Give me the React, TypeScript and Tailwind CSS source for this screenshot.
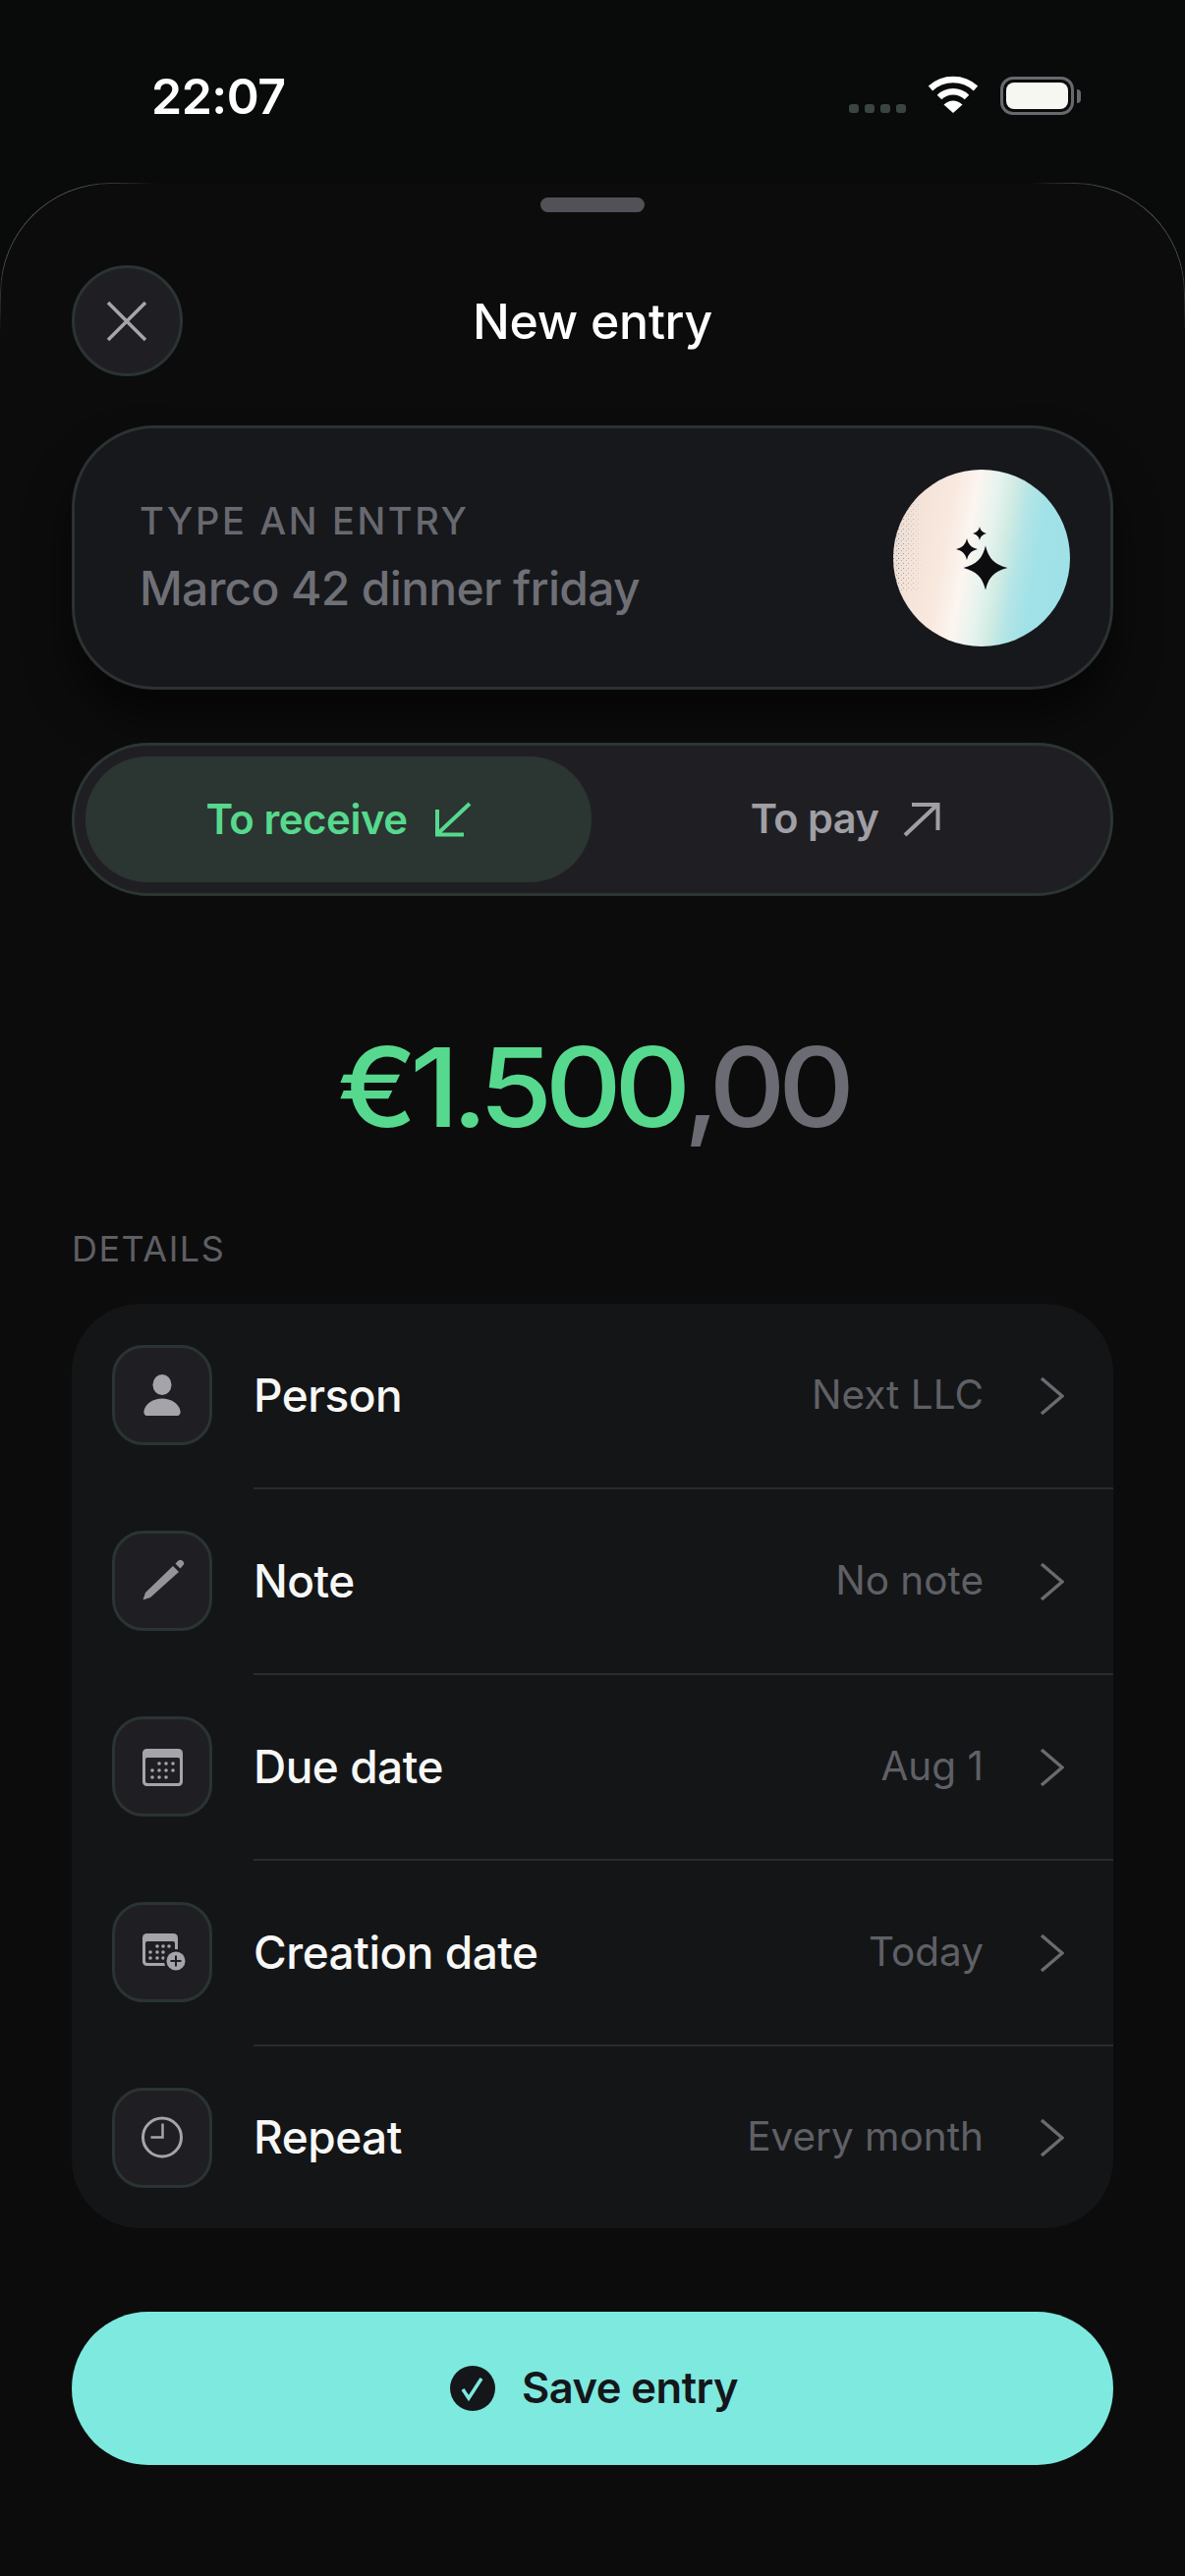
import { FC, ReactNode } from "react";

const Star: FC<{ x: number; y: number; r: number }> = ({ x, y, r }) => (
  <path
    transform={`translate(${x} ${y}) scale(${r})`}
    d="M0 -1C.14 -.42 .4 -.16 1 0C.4 .16 .14 .42 0 1C-.14 .42 -.4 .16 -1 0C-.4 -.16 -.14 -.42 0 -1Z"
  />
);

const Box: FC<{ children: ReactNode }> = ({ children }) => (
  <div className="flex h-[102px] w-[102px] shrink-0 items-center justify-center rounded-[32px] border-[3px] border-[#2a3432] bg-[#1f1f23]">
    <svg width="60" height="60" viewBox="0 0 60 60" fill="#a5a4aa">
      {children}
    </svg>
  </div>
);

const PersonIcon = () => (
  <Box>
    <ellipse cx="30" cy="19.5" rx="9.5" ry="10.5" />
    <path d="M11.5 46C13 38.5 21 33.5 30 33.5C39 33.5 47 38.5 48.5 46C49 49 47.5 51 45 51H15C12.5 51 11 49 11.5 46Z" />
  </Box>
);

const PencilIcon = () => (
  <Box>
    <path fill="#949499" d="M10.5 49.5L13 42L41 15L47 21L18 47Z" />
    <path fill="#949499" d="M43.5 12.5L46.5 9.5C48 8.500 49.500 8.500 50.500 9.500L51.500 10.500C52.500 11.500 52.500 13 51.500 14L48.500 17.500Z" />
  </Box>
);

const Dots: FC<{ dots: number[][] }> = ({ dots }) => (
  <>
    {dots.map(([x, y]) => (
      <circle key={`${x}-${y}`} cx={x} cy={y} r="1.8" />
    ))}
  </>
);

const CalendarIcon = () => (
  <Box>
    <rect x="10" y="12" width="41" height="38" rx="4.500" />
    <rect x="13" y="21" width="35" height="26" rx="2" fill="#1f1f23" />
    <Dots
      dots={[
        [27, 27], [34, 27], [41, 27],
        [20, 34], [27, 34], [34, 34], [41, 34],
        [20, 41], [27, 41], [34, 41],
      ]}
    />
  </Box>
);

const CalendarPlusIcon = () => (
  <Box>
    <rect x="10" y="11" width="36" height="33" rx="4.500" />
    <rect x="13" y="19" width="30" height="22" rx="2" fill="#1f1f23" />
    <Dots
      dots={[
        [25, 24], [31, 24], [37, 24],
        [18, 30], [25, 30], [31, 30],
        [18, 36], [25, 36], [31, 36],
      ]}
    />
    <circle cx="44" cy="39" r="12" fill="#1f1f23" />
    <circle cx="44" cy="39" r="9.500" />
    <path d="M38.500 39H49.500M44 33.500V44.500" stroke="#1f1f23" strokeWidth="2" />
  </Box>
);

const ClockIcon = () => (
  <Box>
    <circle cx="30" cy="29.500" r="19.500" fill="none" stroke="#a5a4aa" strokeWidth="3" />
    <path d="M30.500 15.500V29.500H18.500" fill="none" stroke="#a5a4aa" strokeWidth="2.500" />
  </Box>
);

const rows = [
  { icon: <PersonIcon />, label: "Person", value: "Next LLC" },
  { icon: <PencilIcon />, label: "Note", value: "No note" },
  { icon: <CalendarIcon />, label: "Due date", value: "Aug 1" },
  { icon: <CalendarPlusIcon />, label: "Creation date", value: "Today" },
  { icon: <ClockIcon />, label: "Repeat", value: "Every month" },
];

const Row: FC<{ icon: ReactNode; label: string; value: string; last: boolean }> = ({ icon, label, value, last }) => (
  <div className={last ? "flex h-[185px] items-center pl-[41px]" : "flex h-[189px] items-center pl-[41px]"}>
    <div className={last ? "" : "mb-[3px]"}>{icon}</div>
    <div
      className={
        last
          ? "ml-[42px] flex h-full flex-1 items-center pr-[50px]"
          : "ml-[42px] flex h-full flex-1 items-center border-b-2 border-[#2a2b2d] pr-[50px]"
      }
    >
      <span className="mb-[1px] text-[46px] leading-none font-medium tracking-[-0.5px] text-[#f7f8f6]">{label}</span>
      <span className="mb-[1px] ml-auto text-[40.5px] leading-none text-[#5f6066]">{value}</span>
      <svg className="ml-[57px]" width="25" height="40" viewBox="0 0 25 40" fill="none" stroke="#6a6a70" strokeWidth="3.500">
        <path d="M2 2L23 20L2 38" />
      </svg>
    </div>
  </div>
);

const App: FC = () => {
  return (
    <div className="flex h-[2622px] w-[1206px] flex-col overflow-hidden bg-[#090a0a] font-['Inter',sans-serif]">
      {/* status bar */}
      <div className="relative flex h-[186px] shrink-0 items-start pt-[68px] pr-[106px] pl-[154px]">
        <span className="text-[50px] leading-[60px] font-semibold tracking-[-0.5px] text-white">22:07</span>
        <div className="mt-[9px] ml-auto flex items-end">
          <div className="mb-[8px] flex gap-[6px]">
            <div className="h-[9px] w-[10px] rounded-[3px] bg-[#3b4540]" />
            <div className="h-[9px] w-[10px] rounded-[3px] bg-[#3b4540]" />
            <div className="h-[9px] w-[10px] rounded-[3px] bg-[#3b4540]" />
            <div className="h-[9px] w-[10px] rounded-[3px] bg-[#3b4540]" />
          </div>
          <svg className="mb-[8px] ml-[22px]" width="52" height="38" viewBox="0 0 52 38" fill="none" stroke="#fff" strokeWidth="6.500">
            <path d="M3 13A34 34 0 0 1 49 13" />
            <path d="M12 22A20 20 0 0 1 40 22" />
            <path fill="#fff" stroke="none" d="M26 38L16.500 29.500Q26 21.500 35.500 29.500Z" />
          </svg>
          <div className="mb-[6px] ml-[22px] flex items-center">
            <div className="flex h-[39px] w-[75px] rounded-[13px] border-[3px] border-[#68686e] p-[3px]">
              <div className="flex-1 rounded-[8px] bg-[#f6f6f3]" />
            </div>
            <div className="ml-[3px] h-[14px] w-[4px] rounded-r-full bg-[#68686e]" />
          </div>
        </div>
      </div>

      {/* sheet */}
      <div className="relative flex flex-1 flex-col rounded-t-[112px] bg-[#0c0c0c] px-[73px]">
        <div className="absolute top-0 left-0 h-[150px] w-[170px] rounded-tl-[112px] border-t border-l border-[#555555] [mask-image:radial-gradient(circle_at_20%_20%,#000_30%,transparent_70%)]" />
        <div className="absolute top-0 right-0 h-[150px] w-[170px] rounded-tr-[112px] border-t border-r border-[#555555] [mask-image:radial-gradient(circle_at_80%_20%,#000_30%,transparent_70%)]" />

        <div className="mt-[15px] h-[15px] w-[106px] self-center rounded-full bg-[#515157]" />

        <div className="mt-[54px] grid grid-cols-[113px_1fr_113px] items-center">
          <div className="flex h-[113px] w-[113px] items-center justify-center rounded-full border-[3px] border-[#2a3432] bg-[#1f1f23]">
            <svg className="mr-[2px]" width="42" height="42" viewBox="0 0 42 42" fill="none" stroke="#a5a5aa" strokeWidth="3.500">
              <path d="M2 2L40 40M40 2L2 40" />
            </svg>
          </div>
          <h1 className="text-center text-[50px] leading-none font-medium tracking-[-0.3px] text-white">New entry</h1>
        </div>

        <div className="mt-[50px] flex h-[269px] items-center rounded-[84px] border-[3px] border-[#2b3231] bg-[#16181c] pr-[41px] pl-[66px] shadow-[0_30px_45px_rgba(0,0,0,0.55)]">
          <div className="flex flex-col">
            <span className="text-[38px] leading-[46px] font-[450] tracking-[2.6px] text-[#68686f]">TYPE AN ENTRY</span>
            <span className="mt-[17px] text-[48px] leading-[58px] font-[450] tracking-[-0.7px] text-[#6f6f76]">Marco 42 dinner friday</span>
          </div>
          <div className="ml-auto h-[180px] w-[180px] rounded-full bg-[linear-gradient(100deg,#e6dcd5_0%,#f6e4d9_18%,#f8e8de_30%,#fcf5f0_42%,#e6f3ee_52%,#d0ebe3_60%,#b5e5e6_67%,#a1e2e8_76%,#9fe0e8_100%)]">
            <svg width="180" height="180" viewBox="0 0 180 180" fill="#0d0d0f">
              <defs>
                <pattern id="grain" width="5" height="5" patternUnits="userSpaceOnUse">
                  <rect width="1" height="1" fill="#77777f" />
                  <rect x="3" y="2" width="1" height="1" fill="#9a9aa0" />
                </pattern>
                <linearGradient id="fade" x1="0" x2="1" y1="0" y2="0">
                  <stop offset="0" stopColor="#fff" />
                  <stop offset="1" stopColor="#000" />
                </linearGradient>
                <clipPath id="orb">
                  <circle cx="90" cy="90" r="90" />
                </clipPath>
                <mask id="grainMask">
                  <rect x="0" y="25" width="32" height="100" fill="url(#fade)" />
                </mask>
              </defs>
              <g clipPath="url(#orb)">
                <rect width="40" height="180" fill="url(#grain)" mask="url(#grainMask)" />
              </g>
              <Star x={94} y={100} r={22.500} />
              <Star x={75} y={81} r={11} />
              <Star x={88} y={65} r={7} />
            </svg>
          </div>
        </div>

        <div className="mt-[54px] flex h-[156px] items-center rounded-[78px] border-[3px] border-[#2b3632] bg-[#1f1f23] p-[11px]">
          <div className="flex h-full w-[515px] items-center justify-center gap-[27px] rounded-[63px] bg-[#2b3531] text-[42px] leading-none font-semibold text-[#56d98e]">
            <span className="tracking-[-0.5px]">To receive</span>
            <svg width="38" height="36" viewBox="0 0 38 36" fill="none" stroke="#56d98e" strokeWidth="4">
              <path d="M36 2L3 33M3 8V33.500H30" />
            </svg>
          </div>
          <div className="flex h-full flex-1 items-center justify-center gap-[25px] text-[41.500px] leading-none font-semibold text-[#a09fa5]">
            <span className="tracking-[-0.5px]">To pay</span>
            <svg width="38" height="36" viewBox="0 0 38 36" fill="none" stroke="#a09fa5" strokeWidth="4">
              <path d="M2 34L35 3M9 3H35.500V29" />
            </svg>
          </div>
        </div>

        <div className="mt-[134px] flex h-[120px] origin-center scale-x-[1.08] items-center justify-center text-[112px] leading-none font-medium tracking-[-7px]">
          <span className="text-[#56d98e]">€1.500</span>
          <span className="text-[#6b6b73]">,00</span>
        </div>

        <div className="mt-[87px] text-[36px] leading-[36px] tracking-[1.5px] text-[#5e5e65]">DETAILS</div>

        <div className="mt-[38px] rounded-[70px] bg-[#141517]">
          {rows.map((r, i) => (
            <Row key={r.label} icon={r.icon} label={r.label} value={r.value} last={i === rows.length - 1} />
          ))}
        </div>

        <div className="mt-[85px] flex h-[156px] items-center justify-center gap-[27px] rounded-[78px] bg-[#7ee9df] pl-[3px]">
          <svg width="46" height="46" viewBox="0 0 46 46">
            <circle cx="23" cy="23" r="23" fill="#14161a" />
            <path d="M13 24L19 33L32 13" fill="none" stroke="#7ee9df" strokeWidth="3.500" />
          </svg>
          <span className="text-[43.5px] leading-none font-semibold tracking-[-0.5px] text-[#14161a]">Save entry</span>
        </div>
      </div>
    </div>
  );
};

export default App;
